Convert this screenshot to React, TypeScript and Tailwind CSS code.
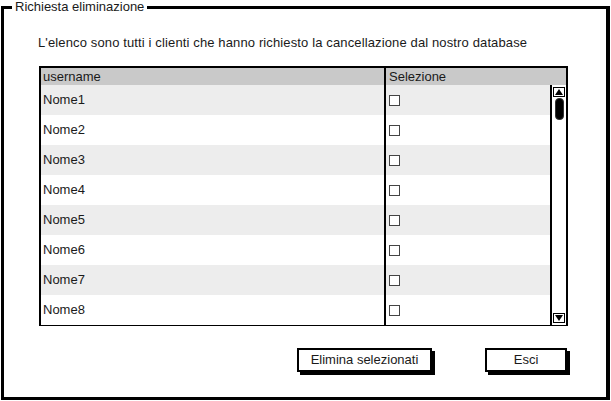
const rows = ["Nome1", "Nome2", "Nome3", "Nome4", "Nome5", "Nome6", "Nome7", "Nome8"];

export default function App() {
  return (
    <div className="w-[611px] h-[401px] bg-white pl-[1px] font-['Liberation_Sans',Arial,sans-serif] text-[13px] text-[#1a1a1a]">
      <fieldset className="w-[609px] h-[400px] border-[3px] border-black border-r-[4px]">
        <legend className="ml-[8px] px-[3px] leading-[14px]">Richiesta eliminazione</legend>

        {/* Descrizione */}
        <p className="mt-[21px] pl-[34px] leading-[16px] tracking-[0.13px]">
          L'elenco sono tutti i clienti che hanno richiesto la cancellazione dal nostro database
        </p>

        {/* Tabella */}
        <div className="ml-[35px] mt-[15px] w-[529px] h-[260px] border-2 border-black flex flex-col">
          <div className="h-[17px] bg-[#c9c9c9] flex leading-[17px]">
            <div className="w-[345px] pl-[2px] border-r-2 border-black">username</div>
            <div className="flex-1 pl-[3px]">Selezione</div>
          </div>
          <div className="flex-1 flex">
            <div className="flex-1 flex flex-col">
              {rows.map((name, i) => (
                <div
                  key={name}
                  className={`h-[30px] flex items-center ${i % 2 === 0 ? "bg-[#ededed]" : "bg-white"}`}
                >
                  <div className="w-[345px] h-full flex items-center pl-[2px] border-r-2 border-black">
                    {name}
                  </div>
                  <div className="flex-1 pl-[3px]">
                    <div className="w-[11px] h-[11px] border border-[#444] bg-white" />
                  </div>
                </div>
              ))}
            </div>
            {/* Scrollbar */}
            <div className="w-[16px] border-l-2 border-black bg-white flex flex-col items-center py-[2px]">
              <div className="w-[12px] h-[10px] border border-black flex items-center justify-center">
                <svg width="8" height="6" viewBox="0 0 8 6">
                  <path d="M0 6 L4 0 L8 6 Z" fill="#000" />
                </svg>
              </div>
              <div className="w-[9px] h-[22px] mt-[1px] rounded-[4px] bg-black border border-[#333]" />
              <div className="flex-1" />
              <div className="w-[12px] h-[10px] border border-black flex items-center justify-center">
                <svg width="8" height="6" viewBox="0 0 8 6">
                  <path d="M0 0 L8 0 L4 6 Z" fill="#000" />
                </svg>
              </div>
            </div>
          </div>
        </div>

        {/* Pulsanti */}
        <div className="ml-[35px] mt-[22px] w-[529px] flex justify-end gap-[53px] pr-[1px]">
          <button className="w-[135px] h-[24px] border-2 border-black bg-white shadow-[3px_3px_0_#000] leading-[20px]">
            Elimina selezionati
          </button>
          <button className="w-[82px] h-[24px] border-2 border-black bg-white shadow-[3px_3px_0_#000] leading-[20px]">
            Esci
          </button>
        </div>
      </fieldset>
    </div>
  );
}
